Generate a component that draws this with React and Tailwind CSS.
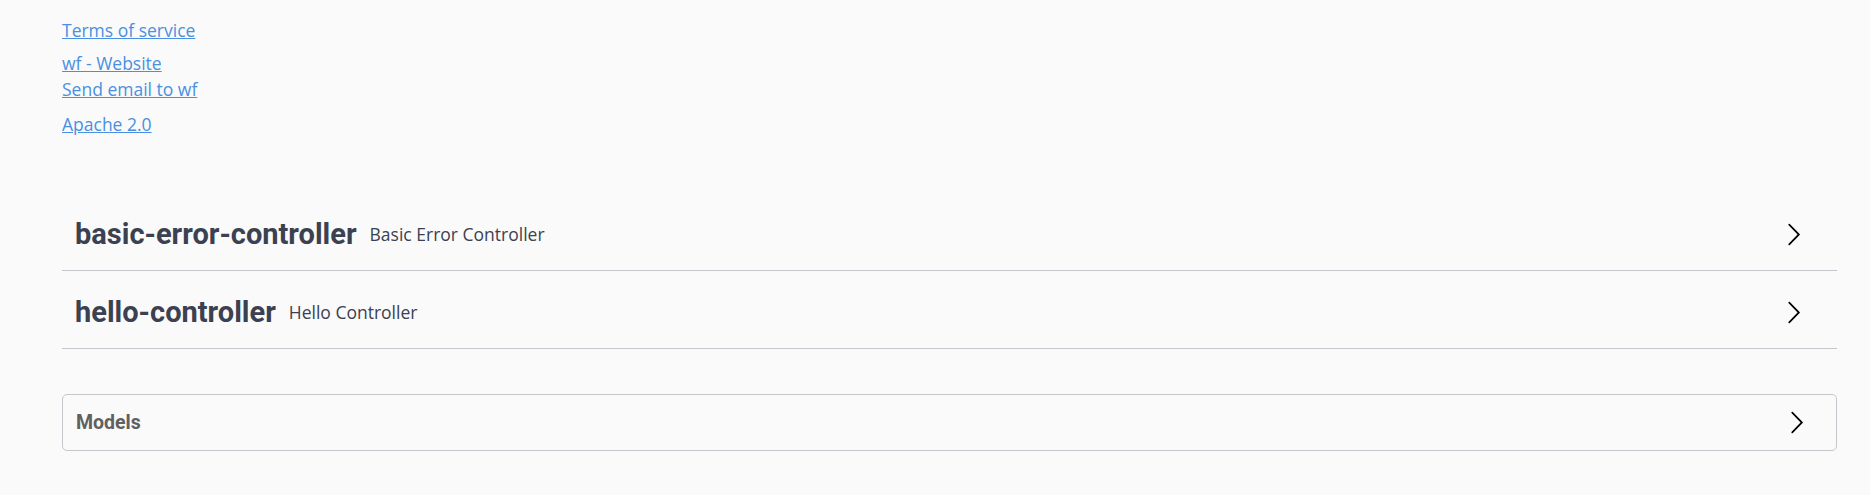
import React from 'react';

const Arrow = () => (
  <svg width="25" height="25" viewBox="0 0 20 20" className="shrink-0">
    <path
      fill="#000"
      d="M13.25 10L6.109 2.58a.697.697 0 0 1 0-.979.68.68 0 0 1 .969 0l7.83 7.908a.697.697 0 0 1 0 .979l-7.83 7.908a.68.68 0 0 1-.969 0 .697.697 0 0 1 0-.979L13.25 10z"
    />
  </svg>
);

const tags = [
  { name: 'basic-error-controller', desc: 'Basic Error Controller' },
  { name: 'hello-controller', desc: 'Hello Controller' },
];

export default function App() {
  return (
    <div className="min-h-screen bg-[#fafafa] pl-[62px] pr-[33px] pt-[18px] font-['Open_Sans',sans-serif]">
      {/* info links */}
      <div className="text-[17.5px] leading-[24px] text-[#4990e2]">
        <div>
          <a href="#" className="underline">Terms of service</a>
        </div>
        <div className="mt-[9px]">
          <a href="#" className="underline">wf - Website</a>
        </div>
        <div className="mt-[2px]">
          <a href="#" className="underline">Send email to wf</a>
        </div>
        <div className="mt-[11px]">
          <a href="#" className="underline">Apache 2.0</a>
        </div>
      </div>

      {/* tags */}
      <div className="mt-[63px]">
        {tags.map((t) => (
          <div
            key={t.name}
            className="mb-[6px] flex h-[72px] items-center border-b border-[#c4c6cb] pl-[13px] pr-[31px] cursor-pointer"
          >
            <span className="font-['Roboto',sans-serif] text-[29px] font-bold text-[#3b4151]">
              {t.name}
            </span>
            <span className="flex-1 pl-[13px] text-[17.5px] text-[#3b4151]">{t.desc}</span>
            <Arrow />
          </div>
        ))}
      </div>

      {/* models */}
      <div className="mt-[45px] flex h-[57px] items-center rounded-[5px] border border-[#c4c6cb] pl-[13px] pr-[27px]">
        <span className="flex-1 font-['Roboto',sans-serif] text-[19.5px] font-bold text-[#606060]">
          Models
        </span>
        <Arrow />
      </div>
    </div>
  );
}
